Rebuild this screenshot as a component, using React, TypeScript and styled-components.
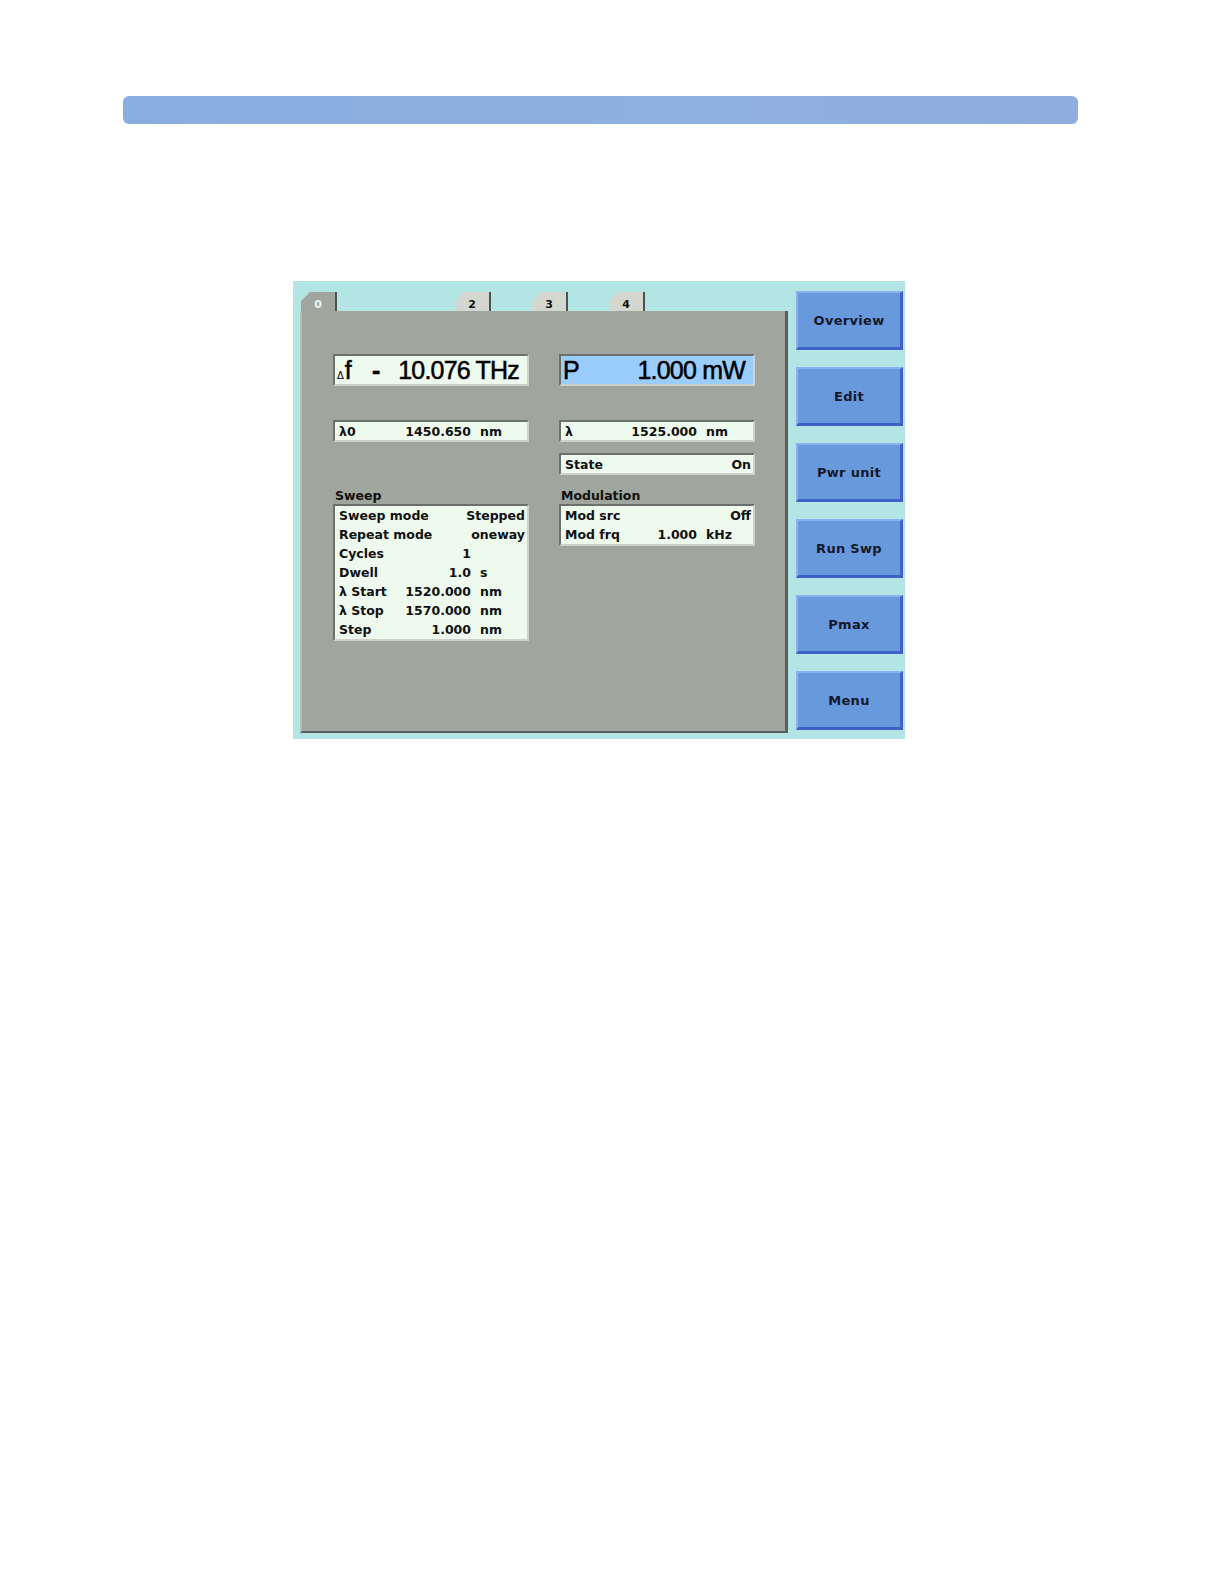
import React from "react";
import styled, { createGlobalStyle } from "styled-components";

const Global = createGlobalStyle`
  html, body { margin: 0; padding: 0; background: #ffffff; }
  body { font-family: "DejaVu Sans", "Liberation Sans", sans-serif; }
  * { box-sizing: border-box; }
`;

const Page = styled.div`
  width: 1222px;
  height: 1582px;
  padding-top: 96px;
  overflow: hidden;
`;

const TopBar = styled.div`
  margin-left: 123px;
  width: 955px;
  height: 28px;
  border-radius: 6px;
  background: linear-gradient(90deg, #89ade0 0%, #8eb0e0 50%, #8faedf 100%);
`;

const Screen = styled.div`
  margin: 157px 0 0 293px;
  width: 612px;
  height: 458px;
  background: #b2e5e3;
  display: flex;
  gap: 8px;
  padding: 10px 2px 6px 7px;
`;

const TabArea = styled.div`
  width: 488px;
  display: flex;
  flex-direction: column;
`;

const TabRow = styled.div`
  height: 20px;
  display: flex;
  align-items: flex-end;
  gap: 41px;
  padding-left: 1px;
`;

const Tab = styled.div<{ $active?: boolean; $hidden?: boolean }>`
  width: 36px;
  height: 19px;
  visibility: ${(p) => (p.$hidden ? "hidden" : "visible")};
  background: ${(p) => (p.$active ? "#a0a69e" : "#d3d7cf")};
  color: ${(p) => (p.$active ? "#eef4ee" : "#101010")};
  border-right: 2px solid #4c524c;
  clip-path: polygon(9px 0, 100% 0, 100% 100%, 0 100%, 0 9px);
  font-size: 11px;
  font-weight: bold;
  text-align: center;
  padding: 7px 0 0 0;
  line-height: 12px;
`;

const Panel = styled.div`
  flex: 1;
  background: #a0a69e;
  border-left: 2px solid #b8c0b6;
  border-right: 3px solid #5c605c;
  border-bottom: 2px solid #5c605c;
  padding: 43px 0 0 31px;
  display: flex;
  gap: 30px;
`;

const Column = styled.div`
  width: 196px;
  display: flex;
  flex-direction: column;
`;

const BigField = styled.div<{ $blue?: boolean }>`
  height: 32px;
  background: ${(p) => (p.$blue ? "#9accfc" : "#eefaee")};
  border: 2px solid;
  border-color: #6c706c #cdd1c9 #cdd1c9 #6c706c;
  display: flex;
  align-items: baseline;
  padding: 0 8px 0 2px;
  font-family: "Liberation Sans", "DejaVu Sans", sans-serif;
  font-size: 25px;
  letter-spacing: -0.8px;
  -webkit-text-stroke: 0.5px #000;
  color: #000;
  line-height: 28px;
`;

const BigLabel = styled.span``;

const Delta = styled.span`
  font-family: "DejaVu Sans", sans-serif;
  font-size: 10px;
  letter-spacing: 0;
  -webkit-text-stroke: 0;
  margin-right: 1px;
`;

const BigSign = styled.span`
  margin-left: 21px;
  font-weight: bold;
`;

const BigValue = styled.span`
  margin-left: auto;
`;

const Field = styled.div<{ $mt: number }>`
  margin-top: ${(p) => p.$mt}px;
  height: 22px;
  background: #eefaee;
  border: 2px solid;
  border-color: #6c706c #cdd1c9 #cdd1c9 #6c706c;
  padding: 0 2px 0 2px;
  display: flex;
  align-items: center;
`;

const Section = styled.div<{ $mt: number }>`
  margin-top: ${(p) => p.$mt}px;
  display: flex;
  flex-direction: column;
`;

const SectionLabel = styled.div`
  height: 15px;
  padding-left: 2px;
  font-size: 12.5px;
  font-weight: bold;
  line-height: 14px;
  color: #101010;
`;

const Box = styled.div`
  background: #eefaee;
  border: 2px solid;
  border-color: #6c706c #cdd1c9 #cdd1c9 #6c706c;
  padding: 0 2px 0 2px;
`;

const Row = styled.div`
  width: 100%;
  height: 19px;
  display: grid;
  grid-template-columns: auto 1fr 54px;
  align-items: center;
  font-size: 12.5px;
  font-weight: bold;
  color: #111;
  white-space: nowrap;
  line-height: 19px;
`;

const RowLabel = styled.span`
  padding-left: 2px;
`;

const RowValue = styled.span<{ $span?: boolean }>`
  text-align: right;
  grid-column: ${(p) => (p.$span ? "2 / 4" : "2 / 3")};
`;

const RowUnit = styled.span`
  padding-left: 9px;
`;

const ButtonColumn = styled.div`
  width: 107px;
  display: flex;
  flex-direction: column;
  gap: 17px;
`;

const SoftKey = styled.div`
  height: 59px;
  background: #6899dd;
  border-style: solid;
  border-width: 2px 3px 3px 2px;
  border-color: #8ab2ee #3e62c8 #3e62c8 #8ab2ee;
  display: flex;
  align-items: center;
  justify-content: center;
  font-size: 13px;
  font-weight: bold;
  letter-spacing: 0.3px;
  color: #14182a;
`;

type RowData = { label: string; value: string; unit?: string; span?: boolean };

const sweepRows: RowData[] = [
  { label: "Sweep mode", value: "Stepped", span: true },
  { label: "Repeat mode", value: "oneway", span: true },
  { label: "Cycles", value: "1" },
  { label: "Dwell", value: "1.0", unit: "s" },
  { label: "λ Start", value: "1520.000", unit: "nm" },
  { label: "λ Stop", value: "1570.000", unit: "nm" },
  { label: "Step", value: "1.000", unit: "nm" },
];

const modRows: RowData[] = [
  { label: "Mod src", value: "Off", span: true },
  { label: "Mod frq", value: "1.000", unit: "kHz" },
];

const DataRow: React.FC<{ r: RowData }> = ({ r }) => (
  <Row>
    <RowLabel>{r.label}</RowLabel>
    <RowValue $span={r.span}>{r.value}</RowValue>
    {!r.span && <RowUnit>{r.unit ?? ""}</RowUnit>}
  </Row>
);

const keys = ["Overview", "Edit", "Pwr unit", "Run Swp", "Pmax", "Menu"];

export default function App() {
  return (
    <Page>
      <Global />
      <TopBar />
      <Screen>
        <TabArea>
          <TabRow>
            <Tab $active>0</Tab>
            <Tab $hidden>1</Tab>
            <Tab>2</Tab>
            <Tab>3</Tab>
            <Tab>4</Tab>
          </TabRow>
          <Panel>
            <Column>
              <BigField>
                <BigLabel>
                  <Delta>Δ</Delta>f
                </BigLabel>
                <BigSign>-</BigSign>
                <BigValue>10.076 THz</BigValue>
              </BigField>
              <Field $mt={34}>
                <DataRow r={{ label: "λ0", value: "1450.650", unit: "nm" }} />
              </Field>
              <Section $mt={47}>
                <SectionLabel>Sweep</SectionLabel>
                <Box>
                  {sweepRows.map((r) => (
                    <DataRow key={r.label} r={r} />
                  ))}
                </Box>
              </Section>
            </Column>
            <Column>
              <BigField $blue>
                <BigLabel>P</BigLabel>
                <BigValue>1.000 mW</BigValue>
              </BigField>
              <Field $mt={34}>
                <DataRow r={{ label: "λ", value: "1525.000", unit: "nm" }} />
              </Field>
              <Field $mt={11}>
                <DataRow r={{ label: "State", value: "On", span: true }} />
              </Field>
              <Section $mt={14}>
                <SectionLabel>Modulation</SectionLabel>
                <Box>
                  {modRows.map((r) => (
                    <DataRow key={r.label} r={r} />
                  ))}
                </Box>
              </Section>
            </Column>
          </Panel>
        </TabArea>
        <ButtonColumn>
          {keys.map((k) => (
            <SoftKey key={k}>{k}</SoftKey>
          ))}
        </ButtonColumn>
      </Screen>
    </Page>
  );
}
